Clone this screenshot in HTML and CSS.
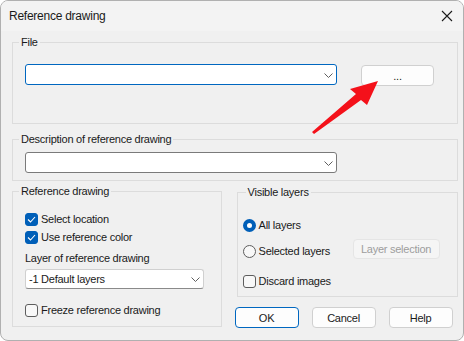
FILE: index.html
```html
<!DOCTYPE html>
<html lang="en">
<head>
    <meta charset="UTF-8">
    <title>Reference drawing</title>
    <link rel="stylesheet" href="styles.css">
</head>
<body>
    <div class="window">
        <div class="titlebar">
            <span class="title">Reference drawing</span>
            <svg class="close" width="12" height="12" viewBox="0 0 12 12">
                <path d="M1 1 L11 11 M11 1 L1 11" stroke="#1b1b1b" stroke-width="1.1" fill="none"/>
            </svg>
        </div>

        <div class="content">
            <!-- File -->
            <fieldset class="group group-file">
                <legend>File</legend>
                <div class="file-row">
                    <div class="combo combo-wide combo-focus">
                        <svg class="chevron" width="9" height="5" viewBox="0 0 9 5"><path d="M0.5 0.5 L4.5 4.5 L8.5 0.5" stroke="#5f5f5f" fill="none"/></svg>
                    </div>
                    <button class="btn btn-browse">...</button>
                </div>
            </fieldset>

            <!-- Description -->
            <fieldset class="group group-desc">
                <legend>Description of reference drawing</legend>
                <div class="combo combo-wide">
                    <svg class="chevron" width="9" height="5" viewBox="0 0 9 5"><path d="M0.5 0.5 L4.5 4.5 L8.5 0.5" stroke="#5f5f5f" fill="none"/></svg>
                </div>
            </fieldset>

            <div class="lower">
                <fieldset class="group group-ref">
                    <legend>Reference drawing</legend>
                    <label class="check first"><span class="box checked"><svg width="9" height="7" viewBox="0 0 9 7"><path d="M1 3.5 L3.5 6 L8 1" stroke="#fff" stroke-width="1.1" fill="none"/></svg></span>Select location</label>
                    <label class="check"><span class="box checked"><svg width="9" height="7" viewBox="0 0 9 7"><path d="M1 3.5 L3.5 6 L8 1" stroke="#fff" stroke-width="1.1" fill="none"/></svg></span>Use reference color</label>
                    <div class="field-label">Layer of reference drawing</div>
                    <div class="combo combo-layer">
                        <span class="combo-text">-1 Default layers</span>
                        <svg class="chevron" width="9" height="5" viewBox="0 0 9 5"><path d="M0.5 0.5 L4.5 4.5 L8.5 0.5" stroke="#5f5f5f" fill="none"/></svg>
                    </div>
                    <label class="check freeze"><span class="box"></span>Freeze reference drawing</label>
                </fieldset>

                <div class="right-col">
                    <fieldset class="group group-visible">
                        <legend>Visible layers</legend>
                        <label class="check radio-first"><span class="radio on"></span>All layers</label>
                        <div class="select-row">
                            <label class="check radio-label"><span class="radio"></span>Selected layers</label>
                            <button class="btn btn-disabled">Layer selection</button>
                        </div>
                        <label class="check discard"><span class="box"></span>Discard images</label>
                    </fieldset>

                    <div class="actions">
                        <button class="btn btn-default">OK</button>
                        <button class="btn">Cancel</button>
                        <button class="btn">Help</button>
                    </div>
                </div>
            </div>
        </div>

        <svg class="arrow" width="464" height="341" viewBox="0 0 464 341">
            <polygon points="378,81 367,105 361,100 314,134 312,132 356,94 350,89" fill="#f4111a"/>
        </svg>
    </div>
</body>
</html>
```

FILE: styles.css
```css
* {
    margin: 0;
    padding: 0;
    box-sizing: border-box;
}

body {
    background: #ffffff;
    font-family: "Liberation Sans", Arial, sans-serif;
    font-size: 11px;
    letter-spacing: -0.25px;
    color: #1a1a1a;
}

.window {
    position: relative;
    width: 464px;
    height: 341px;
    background: #f0f0f0;
    border: 1px solid #b0b0b0;
    border-radius: 8px;
    overflow: hidden;
}

.titlebar {
    height: 30px;
    background: #f3f3f3;
    display: flex;
    align-items: center;
    justify-content: space-between;
    padding: 0 10px 0 8px;
}

.title {
    font-size: 12px;
    color: #1a1a1a;
}

.content {
    padding: 3px 5px 0 11px;
}

.group {
    border: 1px solid #dcdcdc;
    padding: 0 12px;
    min-width: 0;
}

.group legend {
    line-height: 16px;
    padding: 0 2px;
    margin-left: -6px;
    color: #1a1a1a;
}

.group-file {
    height: 90px;
}

.file-row {
    display: flex;
    align-items: flex-start;
    margin-top: 14px;
}

.combo {
    position: relative;
    height: 21px;
    background: #ffffff;
    border: 1px solid #7a7a7a;
    border-radius: 3px;
    display: flex;
    align-items: center;
}

.combo-wide {
    width: 312px;
}

.combo-focus {
    border-color: #0067c0;
}

.chevron {
    position: absolute;
    right: 3px;
    top: 8px;
}

.group-desc {
    height: 50px;
    margin-top: 7px;
}

.group-desc .combo {
    margin-top: 5px;
}

.btn {
    font-family: inherit;
    font-size: 11px;
    letter-spacing: inherit;
    color: #1a1a1a;
    height: 21px;
    width: 64px;
    background: #fdfdfd;
    border: 1px solid #d0d0d0;
    border-radius: 4px;
}

.btn-browse {
    width: 73px;
    margin-left: 24px;
    margin-top: 1px;
}

.btn-default {
    border-color: #0067c0;
}

.btn-disabled {
    width: 87px;
    height: 20px;
    color: #9d9d9d;
    background: #f5f5f5;
    border-color: #e5e5e5;
    margin-top: -3px;
}

.lower {
    display: flex;
    gap: 15px;
    margin-top: 2px;
}

.group-ref {
    width: 210px;
    height: 144px;
}

.right-col {
    width: 222px;
}

.group-visible {
    height: 113px;
    margin-top: 1px;
    padding: 0 5px;
}

.group-visible legend {
    margin-left: 3px;
}

.check {
    display: flex;
    align-items: center;
    gap: 3px;
    height: 18px;
    white-space: nowrap;
}

.check.first {
    margin-top: 11px;
}

.box {
    width: 13px;
    height: 13px;
    border: 1px solid #5d5d5d;
    border-radius: 3px;
    background: #f8f8f8;
    display: flex;
    align-items: center;
    justify-content: center;
}

.box.checked {
    background: #005fb8;
    border-color: #005fb8;
}

.field-label {
    line-height: 16px;
    margin-top: 4px;
}

.combo-layer {
    width: 179px;
    height: 20px;
    margin-top: 3px;
    border-color: #d0d0d0;
    border-bottom-color: #8a8a8a;
    padding-left: 3px;
}

.combo-layer .chevron {
    top: 7px;
}

.check.freeze {
    margin-top: 12px;
}

.radio {
    width: 13px;
    height: 13px;
    border: 1px solid #5d5d5d;
    border-radius: 50%;
    background: #f8f8f8;
}

.radio.on {
    border: 4px solid #005fb8;
    background: #ffffff;
}

.check.radio-first {
    margin-top: 16px;
}

.select-row {
    display: flex;
    align-items: flex-start;
    margin-top: 8px;
}

.radio-label {
    width: 110px;
}

.check.discard {
    margin-top: 12px;
}

.actions {
    display: flex;
    gap: 13px;
    margin: 10px 0 0 -2px;
}

.arrow {
    position: absolute;
    left: -1px;
    top: -1px;
    pointer-events: none;
}
```
